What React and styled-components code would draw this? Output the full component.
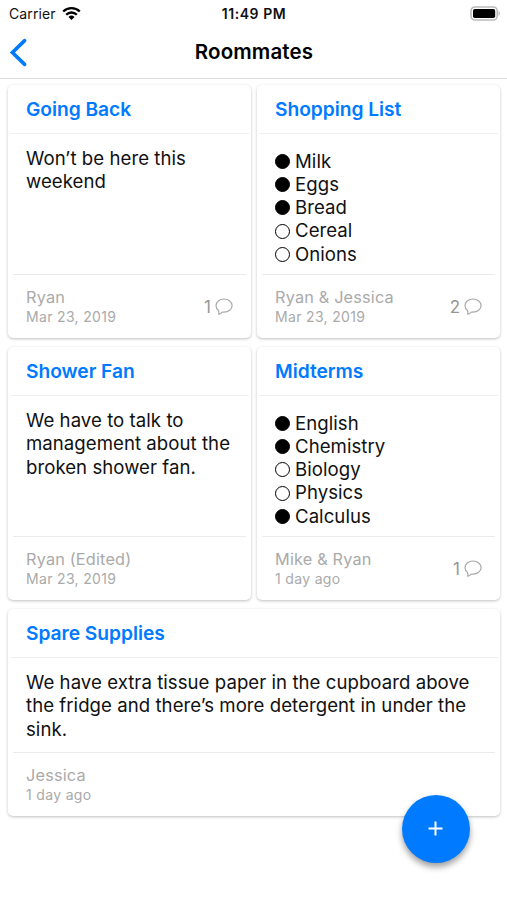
import React from 'react';
import styled, { createGlobalStyle } from 'styled-components'

const GlobalStyle = createGlobalStyle`
    * {
        box-sizing: border-box;
    }
    body {
        margin: 0;
        background: white;
        font-family: Inter, 'Liberation Sans', sans-serif;
    }
`

const Screen = styled.div`
    position: relative;
    width: 507px;
    height: 900px;
    overflow: hidden;
    background: white;
`

const StatusBar = styled.div`
    display: grid;
    grid-template-columns: 1fr auto 1fr;
    align-items: center;
    height: 27px;
    padding: 0 6px 0 9px;
    font-size: 14px;
    color: #111;
`

const Carrier = styled.div`
    display: flex;
    align-items: center;
    gap: 6px;
    letter-spacing: 0.1px;
`

const Clock = styled.div`
    padding-right: 2px;
    font-weight: 600;
    letter-spacing: 0.55px;
`

const BatteryHolder = styled.div`
    display: flex;
    justify-content: flex-end;
`

const NavBar = styled.header`
    display: grid;
    grid-template-columns: 1fr auto 1fr;
    align-items: center;
    height: 52px;
    padding: 0 9px 2px;
    border-bottom: 1px solid #dcdcdc;
`

const BackButton = styled.button`
    display: flex;
    justify-self: start;
    padding: 2px 0 0;
    background: none;
    border: none;
`

const PageTitle = styled.h1`
    margin: 0;
    padding-left: 1px;
    font-size: 20.5px;
    font-weight: 600;
    line-height: 26px;
    letter-spacing: 0.12px;
    color: black;
`

const Board = styled.main`
    display: grid;
    grid-template-columns: 1fr 1fr;
    gap: 9px 6px;
    padding: 6px 7px 0 8px;
`

const Card = styled.article`
    display: flex;
    flex-direction: column;
    grid-column: ${props => props.$wide ? 'span 2' : 'auto'};
    height: ${props => props.$wide ? '207px' : '253px'};
    border-radius: 5px;
    background: white;
    box-shadow: 0 1px 3px 0 rgba(0, 0, 0, 0.25);
`

const CardTitle = styled.h2`
    height: 49px;
    margin: 0 2px;
    padding: 0 16px;
    border-bottom: 1px solid #efefef;
    font-size: 19.2px;
    font-weight: 600;
    line-height: 49px;
    letter-spacing: -0.03px;
    color: #007aff;
    white-space: nowrap;
`

const CardBody = styled.div`
    flex: 1;
    padding: 13px 8px 0 18px;
    font-size: 18.6px;
    line-height: 23.3px;
    letter-spacing: 0.05px;
    color: #111;
`

const CheckList = styled.ul`
    margin: 0;
    padding: 2.5px 0 0;
    list-style: none;
`

const CheckItem = styled.li`
    display: flex;
    align-items: center;
    gap: 5px;
`

const Bullet = styled.span`
    width: 15px;
    height: 15px;
    border: 1.5px solid black;
    border-radius: 50%;
    background: ${props => props.$checked ? 'black' : 'white'};
`

const CardFooter = styled.footer`
    display: flex;
    justify-content: space-between;
    align-items: center;
    height: 64px;
    margin: 0 5px;
    padding: 0 13px;
    border-top: 1px solid #ebebeb;
    color: #aaa;
`

const Author = styled.div`
    font-size: 16.3px;
    line-height: 20px;
    letter-spacing: 0.17px;
`

const PostedAt = styled.div`
    font-size: 14px;
    line-height: 19px;
    letter-spacing: 0.33px;
`

const Comments = styled.div`
    display: flex;
    align-items: center;
    gap: 4px;
    font-size: 17px;
    color: #959595;
`

const AddButton = styled.button`
    position: absolute;
    left: 401.7px;
    top: 794.7px;
    display: flex;
    justify-content: center;
    align-items: center;
    width: 68.6px;
    height: 68.6px;
    padding: 0 1px 0 0;
    border: none;
    border-radius: 50%;
    background: #007aff;
    box-shadow: 0 4px 6px 0 rgba(0, 0, 0, 0.38);
`

const WifiIcon = () => (
    <svg width="19" height="15" viewBox="0 0 19 15">
        <g fill="none" stroke="black" strokeWidth="2.3">
            <path d="M1.2 5.5a11.8 11.8 0 0 1 16.6 0" />
            <path d="M4.2 8.7a7.5 7.5 0 0 1 10.6 0" />
        </g>
        <path d="M6.5 10.9a4.3 4.3 0 0 1 6 0L9.5 14z" />
    </svg>
)

const BatteryIcon = () => (
    <svg width="31" height="15" viewBox="0 0 31 15">
        <rect x="1" y="1" width="26.2" height="13" rx="4" fill="white" stroke="#bbb" strokeWidth="1.6" />
        <rect x="3" y="3" width="22.2" height="9" rx="1.8" />
        <path d="M28.5 5a2.8 2.8 0 0 1 0 5z" fill="#bbb" />
    </svg>
)

const BackIcon = () => (
    <svg width="19" height="29" viewBox="0 0 19 29">
        <path d="M15.6 2.6 3.4 14.5l12.2 11.9" fill="none" stroke="#007aff" strokeWidth="3.6" strokeLinecap="round" strokeLinejoin="miter" />
    </svg>
)

const CommentIcon = () => (
    <svg width="18" height="18" viewBox="0 0 18 18">
        <path d="M3.6 12.5C1.9 11.3 1 9.5 1 7.600 1 3.900 4.500 1 9 1s8.100 2.900 8.100 6.600-3.600 6.600-8.100 6.600q-.9 0-1.700-.1Q5.800 15.600 3.700 16.300 4.200 14.500 3.600 12.500z" fill="none" stroke="#aaa" strokeWidth="1.2" strokeLinejoin="round" />
    </svg>
)

const PlusIcon = () => (
    <svg width="15" height="15" viewBox="0 0 15 15">
        <path d="M7.5 0.5v14M0.5 7.5h14" stroke="white" strokeWidth="2" />
    </svg>
)

const notes = [
    {
        title: 'Going Back',
        text: 'Won’t be here this weekend',
        author: 'Ryan',
        date: 'Mar 23, 2019',
        comments: 1,
    },
    {
        title: 'Shopping List',
        items: [
            { label: 'Milk', checked: true },
            { label: 'Eggs', checked: true },
            { label: 'Bread', checked: true },
            { label: 'Cereal', checked: false },
            { label: 'Onions', checked: false },
        ],
        author: 'Ryan & Jessica',
        date: 'Mar 23, 2019',
        comments: 2,
    },
    {
        title: 'Shower Fan',
        text: 'We have to talk to management about the broken shower fan.',
        author: 'Ryan (Edited)',
        date: 'Mar 23, 2019',
    },
    {
        title: 'Midterms',
        items: [
            { label: 'English', checked: true },
            { label: 'Chemistry', checked: true },
            { label: 'Biology', checked: false },
            { label: 'Physics', checked: false },
            { label: 'Calculus', checked: true },
        ],
        author: 'Mike & Ryan',
        date: '1 day ago',
        comments: 1,
    },
    {
        title: 'Spare Supplies',
        text: 'We have extra tissue paper in the cupboard above the fridge and there’s more detergent in under the sink.',
        author: 'Jessica',
        date: '1 day ago',
        wide: true,
    },
]

const Note = ({ note }) => (
    <Card $wide={note.wide}>
        <CardTitle>{note.title}</CardTitle>
        <CardBody>
            {note.text}
            {note.items && (
                <CheckList>
                    {note.items.map(item => (
                        <CheckItem key={item.label}>
                            <Bullet $checked={item.checked} />
                            {item.label}
                        </CheckItem>
                    ))}
                </CheckList>
            )}
        </CardBody>
        <CardFooter>
            <div>
                <Author>{note.author}</Author>
                <PostedAt>{note.date}</PostedAt>
            </div>
            {note.comments && (
                <Comments>
                    {note.comments}
                    <CommentIcon />
                </Comments>
            )}
        </CardFooter>
    </Card>
)

const App = () => {
    return (
        <Screen>
            <GlobalStyle />
            <StatusBar>
                <Carrier>Carrier <WifiIcon /></Carrier>
                <Clock>11:49 PM</Clock>
                <BatteryHolder><BatteryIcon /></BatteryHolder>
            </StatusBar>
            <NavBar>
                <BackButton aria-label="Back"><BackIcon /></BackButton>
                <PageTitle>Roommates</PageTitle>
            </NavBar>
            <Board>
                {notes.map(note => <Note key={note.title} note={note} />)}
            </Board>
            <AddButton aria-label="Add note"><PlusIcon /></AddButton>
        </Screen>
    );
};

export default App;
